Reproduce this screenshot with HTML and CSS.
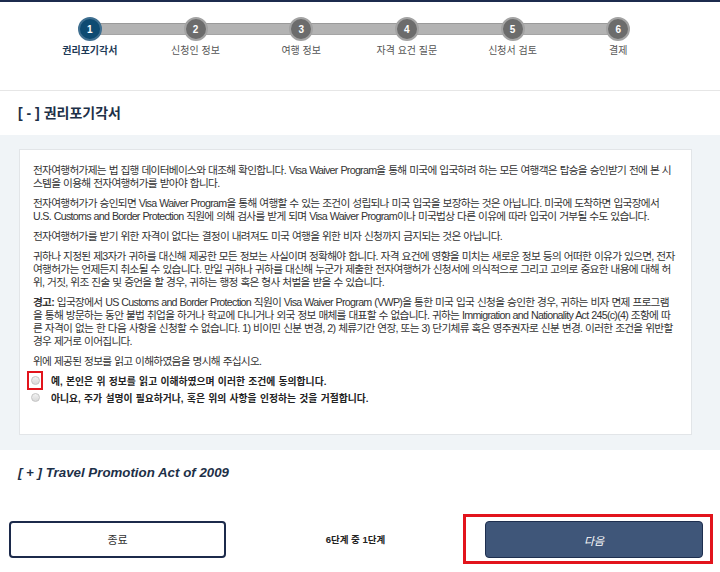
FILE: index.html
```html
<!DOCTYPE html>
<html lang="ko">
<head>
  <meta charset="UTF-8">
  <title>ESTA 신청 - 권리포기각서</title>
  <link rel="stylesheet" href="styles.css">
</head>
<body>
  <div class="topline"></div>

  <ol class="steps">
    <li class="step active"><span class="num">1</span><span class="label">권리포기각서</span></li>
    <li class="step"><span class="num">2</span><span class="label">신청인 정보</span></li>
    <li class="step"><span class="num">3</span><span class="label">여행 정보</span></li>
    <li class="step"><span class="num">4</span><span class="label">자격 요건 질문</span></li>
    <li class="step"><span class="num">5</span><span class="label">신청서 검토</span></li>
    <li class="step"><span class="num">6</span><span class="label">결제</span></li>
  </ol>

  <div class="divider"></div>

  <h2 class="sec-title">[ - ] 권리포기각서</h2>

  <div class="band">
    <div class="panel">
      <p>전자여행허가제는 법 집행 데이터베이스와 대조해 확인합니다. Visa Waiver Program을 통해 미국에 입국하려 하는 모든 여행객은 탑승을 승인받기 전에 본 시스템을 이용해 전자여행허가를 받아야 합니다.</p>
      <p>전자여행허가가 승인되면 Visa Waiver Program을 통해 여행할 수 있는 조건이 성립되나 미국 입국을 보장하는 것은 아닙니다. 미국에 도착하면 입국장에서 U.S. Customs and Border Protection 직원에 의해 검사를 받게 되며 Visa Waiver Program이나 미국법상 다른 이유에 따라 입국이 거부될 수도 있습니다.</p>
      <p>전자여행허가를 받기 위한 자격이 없다는 결정이 내려져도 미국 여행을 위한 비자 신청까지 금지되는 것은 아닙니다.</p>
      <p>귀하나 지정된 제3자가 귀하를 대신해 제공한 모든 정보는 사실이며 정확해야 합니다. 자격 요건에 영향을 미치는 새로운 정보 등의 어떠한 이유가 있으면, 전자여행허가는 언제든지 취소될 수 있습니다. 만일 귀하나 귀하를 대신해 누군가 제출한 전자여행허가 신청서에 의식적으로 그리고 고의로 중요한 내용에 대해 허위, 거짓, 위조 진술 및 증언을 할 경우, 귀하는 행정 혹은 형사 처벌을 받을 수 있습니다.</p>
      <p><strong>경고:</strong> 입국장에서 US Customs and Border Protection 직원이 Visa Waiver Program (VWP)을 통한 미국 입국 신청을 승인한 경우, 귀하는 비자 면제 프로그램을 통해 방문하는 동안 불법 취업을 하거나 학교에 다니거나 외국 정보 매체를 대표할 수 없습니다. 귀하는 Immigration and Nationality Act 245(c)(4) 조항에 따른 자격이 없는 한 다음 사항을 신청할 수 없습니다. 1) 비이민 신분 변경, 2) 체류기간 연장, 또는 3) 단기체류 혹은 영주권자로 신분 변경. 이러한 조건을 위반할 경우 제거로 이어집니다.</p>
      <p class="prompt">위에 제공된 정보를 읽고 이해하였음을 명시해 주십시오.</p>

      <label class="choice">
        <span class="mark"><input type="radio" name="agree"></span>
        <span>예, 본인은 위 정보를 읽고 이해하였으며 이러한 조건에 동의합니다.</span>
      </label>
      <label class="choice">
        <span class="plain"><input type="radio" name="agree"></span>
        <span>아니요, 주가 설명이 필요하거나, 혹은 위의 사항을 인정하는 것을 거절합니다.</span>
      </label>
    </div>
  </div>

  <h2 class="sec-title closed">[ + ] Travel Promotion Act of 2009</h2>

  <div class="footer">
    <button class="btn btn-exit">종료</button>
    <span class="progress">6단계 중 1단계</span>
    <div class="highlight">
      <button class="btn btn-next">다음</button>
    </div>
  </div>
</body>
</html>
```

FILE: styles.css
```css
body {
  margin: 0;
  background: #fff;
  color: #333;
  font-family: "Liberation Sans Narrow", "Liberation Sans", "Noto Sans CJK KR", sans-serif;
  font-size: 9.8px;
}
.topline {
  height: 2px;
  background: #1c2b4d;
}

/* progress steps */
.steps {
  display: flex;
  list-style: none;
  margin: 15px 0 0 37px;
  padding: 0;
  width: 634px;
}
.step {
  flex: 1;
  position: relative;
  display: flex;
  flex-direction: column;
  align-items: center;
}
.step:not(:last-child)::after {
  content: "";
  position: absolute;
  left: 50%;
  top: 6px;
  width: 100%;
  height: 10px;
  background: #b3b3b3;
  border-top: 1px solid #9a9a9a;
  border-bottom: 1px solid #a5a5a5;
}
.num {
  position: relative;
  z-index: 1;
  width: 20px;
  height: 20px;
  border-radius: 50%;
  background: #6c6c6c;
  border: 2px solid #a3a3a3;
  color: #fff;
  font-family: "Liberation Sans", sans-serif;
  font-weight: bold;
  font-size: 10px;
  display: flex;
  align-items: center;
  justify-content: center;
}
.step.active .num {
  background: #0e4b72;
  border-color: #3f6f90;
}
.label {
  margin-top: 4px;
  line-height: 12px;
  color: #555;
  font-size: 10px;
}
.step.active .label {
  color: #1e3a56;
  font-weight: bold;
}

.divider {
  height: 1px;
  background: #e6e6e6;
  margin-top: 33px;
}

.sec-title {
  margin: 14px 0 14px 18px;
  font-family: "Liberation Sans", "Noto Sans CJK KR", sans-serif;
  font-size: 14px;
  line-height: 16px;
  color: #1d3047;
}
.sec-title.closed {
  font-size: 13.3px;
  font-style: italic;
  margin-top: 15px;
}

/* waiver text */
.band {
  background: #f0f4f7;
  padding: 14px 28px 15px 19px;
}
.panel {
  background: #fff;
  border: 1px solid #e2e5e8;
  padding: 14px 14px 28px 13px;
}
.panel p {
  margin: 0 0 7px;
  line-height: 13px;
  font-size: 10.7px;
  letter-spacing: -0.72px;
  word-spacing: 0.5px;
}
.panel p.prompt {
  margin-bottom: 4px;
}
.choice {
  display: flex;
  align-items: center;
  height: 17px;
  font-weight: bold;
  color: #222;
  word-spacing: 0.6px;
}
.choice .mark,
.choice .plain {
  width: 16px;
  height: 16px;
  margin: 0 8px 0 -6px;
  display: flex;
  align-items: center;
  justify-content: center;
  box-sizing: border-box;
}
.choice .mark {
  border: 2px solid #e2141c;
  height: 19px;
}
input[type="radio"] {
  appearance: none;
  margin: 0;
  width: 9px;
  height: 9px;
  border-radius: 50%;
  border: 1px solid #c4c4c4;
  background: linear-gradient(#f2f2f2, #d9d9d9);
}

/* bottom buttons */
.footer {
  display: flex;
  align-items: center;
  margin: 33px 7px 0 9px;
}
.btn {
  height: 37px;
  border-radius: 4px;
  font-family: "Liberation Sans", "Noto Sans CJK KR", sans-serif;
  font-size: 11px;
  cursor: pointer;
}
.btn-exit {
  width: 217px;
  background: #fff;
  border: 2px solid #1c2a4b;
  color: #333;
}
.progress {
  flex: 1;
  text-align: center;
  padding-left: 22px;
  font-weight: bold;
  font-size: 9.5px;
  color: #222;
}
.highlight {
  border: 3px solid #e2141c;
  padding: 4px 7px 3px 19px;
}
.btn-next {
  display: block;
  width: 218px;
  background: #3f5679;
  border: 1px solid #1e2f4f;
  color: #fff;
  font-style: italic;
}
```
